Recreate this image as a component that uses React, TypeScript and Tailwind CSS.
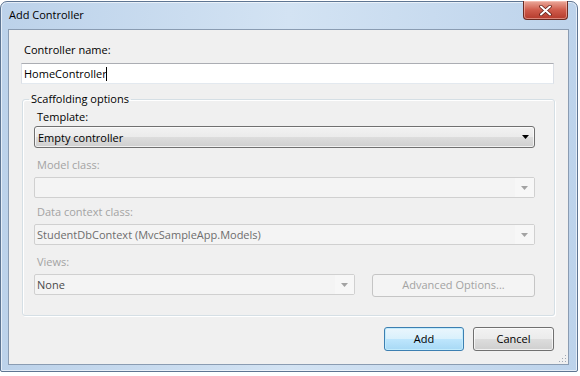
// Win7-style "Add Controller" dialog

const font = { fontFamily: '"Open Sans", "Noto Sans", sans-serif' }

function Arrow({ disabled }: { disabled?: boolean }) {
  return (
    <svg width="7" height="4" viewBox="0 0 7 4" className="shrink-0">
      <path d="M0 0h7L3.5 4z" fill={disabled ? '#a3a3a3' : '#000'} />
    </svg>
  )
}

function DisabledCombo({ text, dark, className = '' }: { text?: string; dark?: boolean; className?: string }) {
  return (
    <div className={`h-[21px] flex items-center rounded-[2px] border border-[#d0d0d0] bg-[#f4f4f4] ${className}`}>
      <span className={`flex-1 pl-[2px] text-[11px] leading-[15px] whitespace-nowrap ${dark ? 'text-[#4a4a4a]' : 'text-[#6d6d6d]'}`}>{text}</span>
      <div className="w-[19px] h-full flex items-center justify-center bg-[#f7f7f7]">
        <Arrow disabled />
      </div>
    </div>
  )
}

function Label({ children, disabled }: { children: string; disabled?: boolean }) {
  return (
    <div className={`h-[16px] leading-[16px] text-[11px] pl-[3px] ${disabled ? 'text-[#a3a3a3]' : 'text-black'}`}>{children}</div>
  )
}

export default function App() {
  return (
    <div className="w-[580px] h-[376px] bg-white pt-[1px]" style={font}>
      <div className="w-[578px] h-[371px] flex flex-col rounded-t-[7px] rounded-b-[2px] border border-[#5e7592] bg-gradient-to-r from-[#bcd2ea] via-[#d3e3f3] to-[#bdd3eb] pl-[7px] pr-[8px] pb-[6px] shadow-[inset_0_0_0_1px_rgba(255,255,255,0.6)]">
        {/* Title bar */}
        <div className="h-[27px] flex items-start justify-between shrink-0">
          <span className="mt-[6px] ml-[1px] text-[11px] leading-[14px] text-black">Add Controller</span>
          <div className="-mt-[1px] mr-[1px] w-[45px] h-[19px] flex items-center justify-center rounded-b-[4px] border border-t-0 border-[#6b2b22] bg-gradient-to-b from-[#e9a99b] via-[#cf5b4b] to-[#b43a2c] shadow-[inset_0_0_0_1px_rgba(255,210,200,0.5)]">
            <svg width="13" height="11" viewBox="0 0 13 11">
              <path d="M2 1.5l9 8M11 1.5l-9 8" stroke="#5a1a12" strokeWidth="3.4" strokeLinecap="round" />
              <path d="M2 1.5l9 8M11 1.5l-9 8" stroke="#fff" strokeWidth="2" strokeLinecap="round" />
            </svg>
          </div>
        </div>

        {/* Client area */}
        <div className="relative flex-1 flex flex-col bg-[#f0f0f0] border border-[#8a9cb2] pt-[12px] pl-[12px] pr-[14px]">
          <Label>Controller name:</Label>
          <div className="mt-[5px] h-[21px] flex items-center border border-[#abadb3] border-b-[#e3e9ef] border-x-[#dbdfe6] bg-white pl-[2px]">
            <span className="text-[11px] leading-[15px] text-black">HomeController</span>
            <span className="w-[1px] h-[14px] bg-black -ml-[1px]" />
          </div>

          <fieldset className="mt-[7px] ml-[1px] -mr-[1px] border border-[#d5dfe5] rounded-[3px] shadow-[inset_1px_1px_0_#fff,1px_1px_0_#fff] pl-[11px] pr-[19px] pb-[18px]">
            <legend className="-ml-[5px] px-[2px] h-[16px] leading-[16px] text-[11px] text-black">Scaffolding options</legend>

            <div className="mt-[2px]">
              <Label>Template:</Label>
              <div className="mt-[1px] h-[22px] flex items-center rounded-[3px] border border-[#707070] bg-[linear-gradient(#f2f2f2_0%,#ebebeb_50%,#dddddd_50%,#cfcfcf_100%)] shadow-[inset_0_0_0_1px_rgba(255,255,255,0.7)] pl-[3px] pr-[5px]">
                <span className="flex-1 text-[11px] leading-[15px] text-black">Empty controller</span>
                <Arrow />
              </div>
            </div>

            <div className="mt-[9px]">
              <Label disabled>Model class:</Label>
              <DisabledCombo className="mt-[4px]" />
            </div>

            <div className="mt-[6px]">
              <Label disabled>Data context class:</Label>
              <DisabledCombo className="mt-[4px]" text="StudentDbContext (MvcSampleApp.Models)" />
            </div>

            <div className="mt-[9px]">
              <Label disabled>Views:</Label>
              <div className="mt-[4px] flex items-start gap-[17px]">
                <DisabledCombo className="w-[321px]" text="None" dark />
                <div className="flex-1 h-[23px] flex items-center justify-center rounded-[3px] border border-[#c5c5c5] bg-[#f4f4f4] text-[11px] text-[#a3a3a3]">
                  Advanced Options...
                </div>
              </div>
            </div>
          </fieldset>

          <div className="mt-[11px] flex justify-end gap-[9px]">
            <button className="w-[80px] h-[24px] rounded-[3px] border border-[#3c7fb1] bg-[linear-gradient(#eaf6fd_0%,#d9f0fc_50%,#bee6fd_50%,#a7d9f5_100%)] shadow-[inset_0_0_0_1px_#c2ebfc] text-[11px] text-black">
              Add
            </button>
            <button className="w-[81px] h-[24px] rounded-[3px] border border-[#707070] bg-[linear-gradient(#f2f2f2_0%,#ebebeb_50%,#dddddd_50%,#cfcfcf_100%)] shadow-[inset_0_0_0_1px_rgba(255,255,255,0.7)] text-[11px] text-black">
              Cancel
            </button>
          </div>

          {/* resize grip */}
          <svg width="9" height="9" viewBox="0 0 9 9" className="absolute right-[1px] bottom-[1px]">
            {[[7, 1], [4, 4], [7, 4], [1, 7], [4, 7], [7, 7]].map(([x, y], i) => (
              <rect key={i} x={x} y={y} width="1" height="1" fill="#a0a8b4" />
            ))}
          </svg>
        </div>
      </div>
    </div>
  )
}
